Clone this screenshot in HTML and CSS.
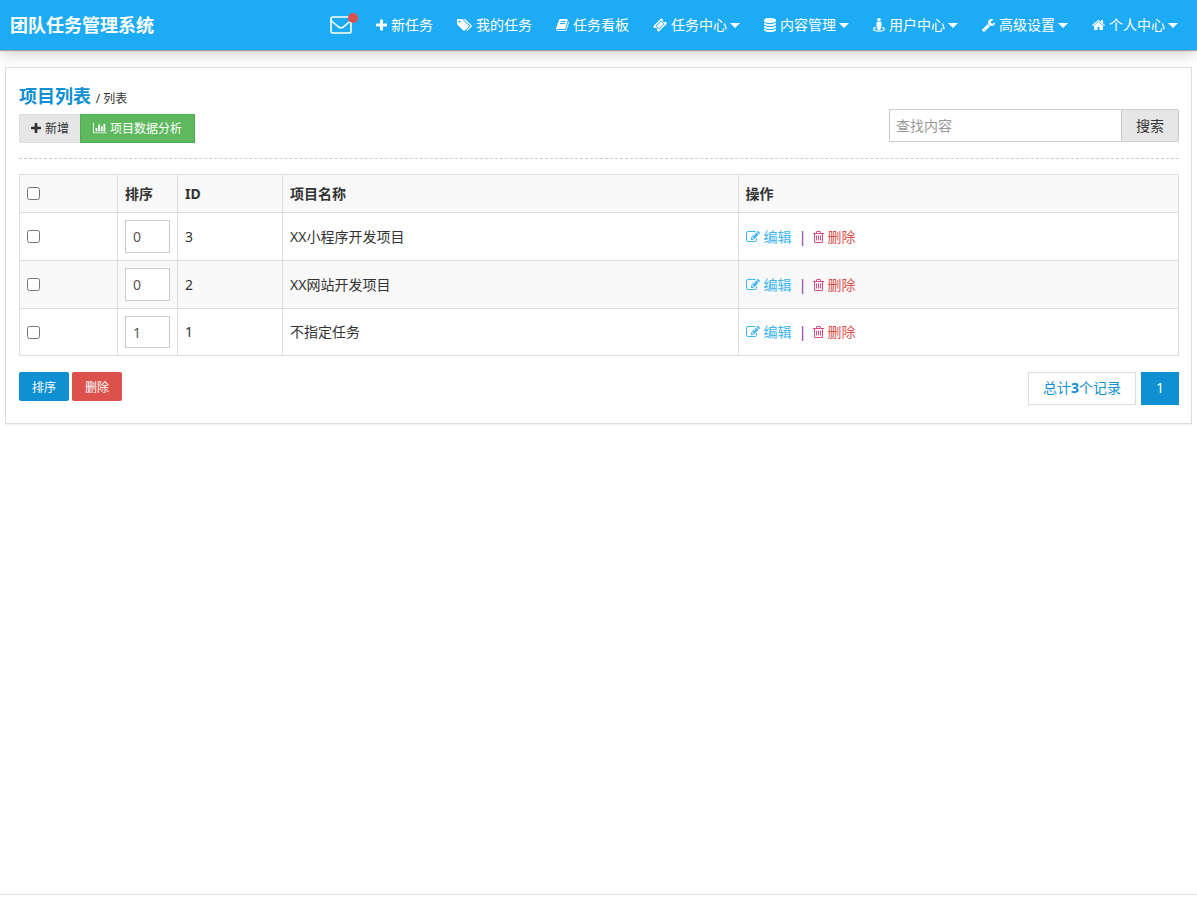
FILE: index.html
```html
<!DOCTYPE html>
<html lang="zh-CN">
<head>
<meta charset="utf-8">
<title>团队任务管理系统</title>
<link rel="stylesheet" href="styles.css">
</head>
<body>
<svg class="sprite" aria-hidden="true">
  <symbol id="plus" viewBox="192 128 1408 1408"><path d="M1600 736v192q0 40-28 68t-68 28h-416v416q0 40-28 68t-68 28h-192q-40 0-68-28t-28-68v-416h-416q-40 0-68-28t-28-68v-192q0-40 28-68t68-28h416v-416q0-40 28-68t68-28h192q40 0 68 28t28 68v416h416q40 0 68 28t28 68z"/></symbol>
  <symbol id="tags" viewBox="0 0 1920 1792"><path d="M448 448q0-53-37.5-90.5t-90.5-37.5-90.5 37.5-37.5 90.5 37.5 90.5 90.5 37.5 90.5-37.5 37.5-90.5zm1067 576q0 53-37 90l-491 492q-39 37-91 37-53 0-90-37l-715-716q-38-37-64.5-101t-26.5-117v-416q0-52 38-90t90-38h416q53 0 117 26.5t102 64.5l715 714q37 39 37 91zm384 0q0 53-37 90l-491 492q-39 37-91 37-36 0-59-14t-53-45l470-470q37-37 37-90 0-52-37-91l-715-714q-38-38-102-64.5t-117-26.5h224q53 0 117 26.5t102 64.5l715 714q37 39 37 91z"/></symbol>
  <symbol id="book" viewBox="64 0 1664 1792"><path d="M1703 478q40 57 18 129l-275 906q-19 64-76.5 107.5t-122.5 43.5h-923q-77 0-148.5-53.5t-99.5-131.5q-24-67-2-127 0-4 3-27t4-37q1-8-3-21.5t-3-19.5q2-11 8-21t16.5-23.5 16.5-23.5q23-38 45-91.5t30-91.5q3-10 .5-30t-.5-28q3-11 17-28t17-23q21-36 42-92t25-90q1-9-2.5-32t.5-28q4-13 22-30.5t22-22.5q19-26 42.5-84.5t27.5-96.5q1-8-3-25.5t-2-26.5q2-8 9-18t18-23 17-21q8-12 16.5-30.5t15-35 16-36 19.5-32 26.5-23.5 36-11.5 47.5 5.5l-1 3q38-9 51-9h761q74 0 114 56t18 130l-274 906q-36 119-71.5 153.5t-128.5 34.5h-869q-27 0-38 15-11 16-1 43 24 70 144 70h923q29 0 56-15.5t35-41.5l300-987q7-22 5-57 38 15 59 43zm-1064 2q-4 13 2 22.5t20 9.5h608q13 0 25.5-9.5t16.5-22.5l21-64q4-13-2-22.5t-20-9.5h-608q-13 0-25.5 9.5t-16.5 22.5zm-83 256q-4 13 2 22.5t20 9.5h608q13 0 25.5-9.5t16.5-22.5l21-64q4-13-2-22.5t-20-9.5h-608q-13 0-25.5 9.5t-16.5 22.5z"/></symbol>
  <symbol id="ticket" viewBox="0 0 1792 1792"><path d="M1024 452l316 316-572 572-316-316zm-211 979l618-618q19-19 19-45t-19-45l-362-362q-18-18-45-18t-45 18l-618 618q-19 19-19 45t19 45l362 362q18 18 45 18t45-18zm889-637l-907 908q-37 37-90.5 37t-90.5-37l-126-126q56-56 56-136t-56-136-136-56-136 56l-125-126q-37-37-37-90.5t37-90.5l907-906q37-37 90.5-37t90.5 37l125 125q-56 56-56 136t56 136 136 56 136-56l126 125q37 37 37 90.5t-37 90.5z"/></symbol>
  <symbol id="database" viewBox="128 0 1536 1792"><path d="M896 768q237 0 443-43t325-127v170q0 69-103 128t-280 93.5-385 34.5-385-34.5-280-93.5-103-128v-170q119 84 325 127t443 43zm0 768q237 0 443-43t325-127v170q0 69-103 128t-280 93.5-385 34.5-385-34.5-280-93.5-103-128v-170q119 84 325 127t443 43zm0-384q237 0 443-43t325-127v170q0 69-103 128t-280 93.5-385 34.5-385-34.5-280-93.5-103-128v-170q119 84 325 127t443 43zm0-1152q208 0 385 34.5t280 93.5 103 128v128q0 69-103 128t-280 93.5-385 34.5-385-34.5-280-93.5-103-128v-128q0-69 103-128t280-93.5 385-34.5z"/></symbol>
  <symbol id="street" viewBox="0 0 12 14"><circle cx="6" cy="1.8" r="1.8"/><path d="M4.5 3.8h3q1 0 1 1v3q0 .7-.8.7v2.7q0 .8-.8.8H5.100q-.8 0-.8-.8V8.500q-.8 0-.8-.7v-3q0-1 1-1z"/><path d="M3.300 9.300C1.700 9.600.6 10.200.6 11c0 1.300 2.400 2.200 5.400 2.200s5.400-.9 5.400-2.200c0-.8-1.100-1.400-2.700-1.700" fill="none" stroke="currentColor" stroke-width="1.200"/></symbol>
  <symbol id="wrench" viewBox="64 0 1664 1792"><path d="M448 1472q0-26-19-45t-45-19-45 19-19 45 19 45 45 19 45-19 19-45zm644-420l-682 682q-37 37-90 37-52 0-91-37l-106-108q-38-36-38-90 0-53 38-91l681-681q39 98 114.500 173.500t173.500 114.500zm634-435q0 39-23 106-47 134-164.500 217.500t-258.500 83.500q-185 0-316.500-131.500t-131.500-316.500 131.500-316.500 316.500-131.500q58 0 121.500 16.500t107.500 46.500q16 11 16 28t-16 28l-293 169v224l193 107q5-3 79-48.500t135.500-81 70.500-35.500q15 0 23.500 10t8.500 25z"/></symbol>
  <symbol id="home" viewBox="64 64 1664 1664"><path d="M1472 992v480q0 26-19 45t-45 19h-384v-384h-256v384h-384q-26 0-45-19t-19-45v-480q0-1 .5-3t.5-3l575-474 575 474q1 2 1 6zm223-69l-62 74q-8 9-21 11h-3q-13 0-21-7l-692-577-692 577q-12 8-24 7-13-2-21-11l-62-74q-8-10-7-23.500t11-21.500l719-599q32-26 76-26t76 26l244 204v-195q0-14 9-23t23-9h192q14 0 23 9t9 23v408l219 182q10 8 11 21.500t-7 23.500z"/></symbol>
  <symbol id="chart" viewBox="0 0 2048 1792"><path d="M640 896v512h-256v-512h256zm384-512v1024h-256v-1024h256zm1024 1152v128h-2048v-1536h128v1408h1920zm-640-896v768h-256v-768h256zm384-384v1152h-256v-1152h256z"/></symbol>
  <symbol id="edit" viewBox="0 0 1792 1792"><path d="M888 1184l116-116-152-152-116 116v56h96v96h56zm440-720q-16-16-33 1l-350 350q-17 17-1 33t33-1l350-350q17-17 1-33zm80 594v190q0 119-84.500 203.500t-203.500 84.500h-832q-119 0-203.500-84.500t-84.500-203.500v-832q0-119 84.500-203.500t203.500-84.500h832q63 0 117 25 15 7 18 23 3 17-9 29l-49 49q-14 14-32 8-23-6-45-6h-832q-66 0-113 47t-47 113v832q0 66 47 113t113 47h832q66 0 113-47t47-113v-126q0-13 9-22l64-64q15-15 35-7t20 29zm-96-738l288 288-672 672h-288v-288zm444 132l-92 92-288-288 92-92q28-28 68-28t68 28l152 152q28 28 28 68t-28 68z"/></symbol>
  <symbol id="trash" viewBox="192 0 1408 1792"><path d="M704 736v576q0 14-9 23t-23 9h-64q-14 0-23-9t-9-23v-576q0-14 9-23t23-9h64q14 0 23 9t9 23zm256 0v576q0 14-9 23t-23 9h-64q-14 0-23-9t-9-23v-576q0-14 9-23t23-9h64q14 0 23 9t9 23zm256 0v576q0 14-9 23t-23 9h-64q-14 0-23-9t-9-23v-576q0-14 9-23t23-9h64q14 0 23 9t9 23zm128 724v-948h-896v948q0 22 7 40.500t14.500 27 10.500 8.500h832q3 0 10.500-8.500t14.500-27 7-40.500zm-672-1076h448l-48-117q-7-9-17-11h-317q-10 2-17 11zm928 32v64q0 14-9 23t-23 9h-96v948q0 83-47 143.500t-113 60.500h-832q-66 0-113-58.500t-47-141.500v-952h-96q-14 0-23-9t-9-23v-64q0-14 9-23t23-9h309l70-167q15-37 54-63t79-26h320q40 0 79 26t54 63l70 167h309q14 0 23 9t9 23z"/></symbol>
</svg>

<header class="topbar">
  <a class="brand" href="#">团队任务管理系统</a>
  <nav class="nav">
    <a class="mail" href="#" aria-label="消息"><svg class="mail-icon" viewBox="0 0 22 18"><rect x="1" y="1" width="20" height="16" rx="1.500"/><path d="M1 4.500c3 2.700 5 4.300 7.500 6.300q2.500 2 5 0C16 8.800 18 7.200 21 4.500"/></svg><span class="dot"></span></a>
    <a class="nav-item" href="#"><svg class="icon i11"><use href="#plus"/></svg>新任务</a>
    <a class="nav-item" href="#"><svg class="icon i15"><use href="#tags"/></svg>我的任务</a>
    <a class="nav-item" href="#"><svg class="icon i13"><use href="#book"/></svg>任务看板</a>
    <a class="nav-item" href="#"><svg class="icon i14"><use href="#ticket"/></svg>任务中心<span class="caret"></span></a>
    <a class="nav-item" href="#"><svg class="icon i12"><use href="#database"/></svg>内容管理<span class="caret"></span></a>
    <a class="nav-item" href="#"><svg class="icon i12"><use href="#street"/></svg>用户中心<span class="caret"></span></a>
    <a class="nav-item" href="#"><svg class="icon i13"><use href="#wrench"/></svg>高级设置<span class="caret"></span></a>
    <a class="nav-item" href="#"><svg class="icon i13"><use href="#home"/></svg>个人中心<span class="caret"></span></a>
  </nav>
</header>

<main class="main">
  <section class="panel">
    <div class="panel-head">
      <div>
        <h1 class="title">项目列表 <small class="crumb">/ 列表</small></h1>
        <div class="btn-group">
          <button class="btn btn-default" type="button"><svg class="icon i10"><use href="#plus"/></svg>新增</button>
          <button class="btn btn-success" type="button"><svg class="icon i14"><use href="#chart"/></svg>项目数据分析</button>
        </div>
      </div>
      <form class="search">
        <input class="search-input" type="text" placeholder="查找内容" aria-label="查找内容">
        <button class="search-btn" type="button">搜索</button>
      </form>
    </div>

    <table class="table">
      <colgroup><col class="c-check"><col class="c-sort"><col class="c-id"><col><col class="c-ops"></colgroup>
      <thead>
        <tr><th><input class="check" type="checkbox" aria-label="全选"></th><th>排序</th><th>ID</th><th>项目名称</th><th>操作</th></tr>
      </thead>
      <tbody>
        <tr><td><input class="check" type="checkbox" aria-label="选择 3"></td><td><input class="sort" type="text" value="0" aria-label="排序 3"></td><td>3</td><td>XX小程序开发项目</td><td><div class="ops"><a class="edit" href="#"><svg class="icon i14"><use href="#edit"/></svg>编辑</a><span class="sep">|</span><a class="del" href="#"><svg class="icon i11"><use href="#trash"/></svg>删除</a></div></td></tr>
        <tr><td><input class="check" type="checkbox" aria-label="选择 2"></td><td><input class="sort" type="text" value="0" aria-label="排序 2"></td><td>2</td><td>XX网站开发项目</td><td><div class="ops"><a class="edit" href="#"><svg class="icon i14"><use href="#edit"/></svg>编辑</a><span class="sep">|</span><a class="del" href="#"><svg class="icon i11"><use href="#trash"/></svg>删除</a></div></td></tr>
        <tr><td><input class="check" type="checkbox" aria-label="选择 1"></td><td><input class="sort" type="text" value="1" aria-label="排序 1"></td><td>1</td><td>不指定任务</td><td><div class="ops"><a class="edit" href="#"><svg class="icon i14"><use href="#edit"/></svg>编辑</a><span class="sep">|</span><a class="del" href="#"><svg class="icon i11"><use href="#trash"/></svg>删除</a></div></td></tr>
      </tbody>
    </table>

    <div class="panel-foot">
      <div class="actions">
        <button class="btn btn-primary" type="button">排序</button>
        <button class="btn btn-danger" type="button">删除</button>
      </div>
      <div class="pager">
        <a class="page" href="#"><span>总计<b>3</b>个记录</span></a>
        <a class="page current" href="#">1</a>
      </div>
    </div>
  </section>
</main>
<footer class="footer"></footer>
</body>
</html>
```

FILE: styles.css
```css
* {
  box-sizing: border-box;
}

body {
  margin: 0;
  min-height: 100vh;
  display: flex;
  flex-direction: column;
  background: #fff;
  color: #333;
  font: 14px/22px "Noto Sans", "Noto Sans CJK SC", sans-serif;
}

a {
  color: inherit;
  text-decoration: none;
}

button,
input {
  font-family: inherit;
  margin: 0;
}

.sprite {
  position: absolute;
  width: 0;
  height: 0;
}

.icon {
  flex: none;
  height: 14px;
  fill: currentColor;
}

.i10 { width: 10px; }
.i11 { width: 11px; }
.i12 { width: 12px; }
.i13 { width: 13px; }
.i14 { width: 14px; }
.i15 { width: 15px; }

.topbar {
  display: flex;
  align-items: center;
  justify-content: space-between;
  height: 50px;
  padding: 0 19px 0 10px;
  background: #1eabf6;
  color: #fff;
  box-shadow: 0 1px 1px rgba(0, 0, 0, .3), 0 8px 12px -2px rgba(0, 0, 0, .15);
}

.brand {
  font-size: 18px;
  font-weight: 700;
}

.nav {
  display: flex;
  align-items: center;
  gap: 24px;
}

.nav-item {
  display: flex;
  align-items: center;
  gap: 4px;
  white-space: nowrap;
}

.caret {
  border: 5px solid transparent;
  border-top-color: currentColor;
  border-bottom: 0;
  margin-left: -1px;
}

.mail {
  position: relative;
  display: flex;
}

.mail-icon {
  width: 22px;
  height: 18px;
  fill: none;
  stroke: currentColor;
  stroke-width: 1.6;
}

.dot {
  position: absolute;
  top: -3px;
  right: -6px;
  width: 10px;
  height: 10px;
  border-radius: 50%;
  background: #dd514c;
}

.main {
  flex: 1;
  padding: 17px 5px;
}

.panel {
  padding: 16px 12px 18px 13px;
  border: 1px solid #ddd;
  box-shadow: 0 1px 1px rgba(0, 0, 0, .05);
}

.panel-head {
  display: flex;
  justify-content: space-between;
  align-items: flex-end;
  padding-bottom: 15px;
  margin-bottom: 15px;
  border-bottom: 1px dashed #ccc;
}

.title {
  margin: 0 0 6px;
  color: #0e90d2;
  font-size: 18px;
  line-height: 24px;
}

.title {
  margin-bottom: 3px;
}

.crumb {
  color: #333;
  font-size: 12px;
  font-weight: 400;
}

.btn-group,
.actions {
  display: flex;
}

.actions {
  gap: 3px;
}

.btn {
  display: flex;
  align-items: center;
  gap: 4px;
  height: 29px;
  padding: 0 12px 1px;
  border: 1px solid;
  border-radius: 2px;
  font-size: 12px;
  color: #fff;
}

.btn-default {
  padding: 0 11px 1px;
  background: #e6e6e6;
  border-color: #ddd;
  border-right: 0;
  border-radius: 2px 0 0 2px;
  color: #333;
}

.btn-success {
  gap: 3px;
  background: #5eb95e;
  border-color: #4caf4c;
  border-radius: 0;
}

.btn-primary,
.btn-danger {
  padding: 0 12px;
  border: 0;
  min-width: 50px;
  justify-content: center;
}

.btn-primary {
  background: #0e90d2;
}

.btn-danger {
  background: #dd514c;
}

.search {
  display: flex;
  width: 25%;
  margin-bottom: 1px;
}

.search-input {
  flex: 1;
  min-width: 0;
  height: 33px;
  padding: 0 6px;
  border: 1px solid #ccc;
  border-right: 0;
  font-size: 14px;
}

.search-input::placeholder {
  color: #999;
}

.search-btn {
  height: 33px;
  padding: 0 14px 2px;
  border: 1px solid #ccc;
  border-radius: 0 2px 2px 0;
  background: #e6e6e6;
  color: #333;
  font-size: 14px;
}

.table {
  width: 100%;
  table-layout: fixed;
  border-collapse: collapse;
}

.c-check { width: 98px; }
.c-sort { width: 60px; }
.c-id { width: 105px; }
.c-ops { width: 38%; }

.table th,
.table td {
  padding: 7px;
  border: 1px solid #ddd;
  text-align: left;
}

.table th {
  height: 38px;
  background: #f9f9f9;
}

.table tbody tr:nth-child(even) {
  background: #f9f9f9;
}

.check {
  display: block;
  width: 13px;
  height: 13px;
}

.sort {
  display: block;
  width: 100%;
  height: 33px;
  padding: 0 7px;
  border: 1px solid #ccc;
  background: #fff;
  color: #555;
  font-size: 14px;
}

.table tbody tr:last-child .sort {
  height: 32px;
}

.ops,
.edit,
.del {
  display: flex;
  align-items: center;
}

.edit {
  gap: 4px;
  color: #3bb4f2;
}

.del {
  gap: 4px;
  color: #dd514c;
}

.sep {
  margin: 0 6px 0 7px;
  width: 8px;
  text-align: center;
  color: #8e2c94;
}

.del .icon {
  color: #dd4a7c;
}

.panel-foot {
  display: flex;
  justify-content: space-between;
  align-items: flex-start;
  margin-top: 16px;
}

.pager {
  display: flex;
  gap: 5px;
}

.page {
  height: 33px;
  padding: 4px 14px;
  border: 1px solid #ddd;
  color: #0e90d2;
}

.current {
  background: #0e90d2;
  border-color: #0e90d2;
  color: #fff;
}

.footer {
  height: 3px;
  border-top: 1px solid #ddd;
}
```
